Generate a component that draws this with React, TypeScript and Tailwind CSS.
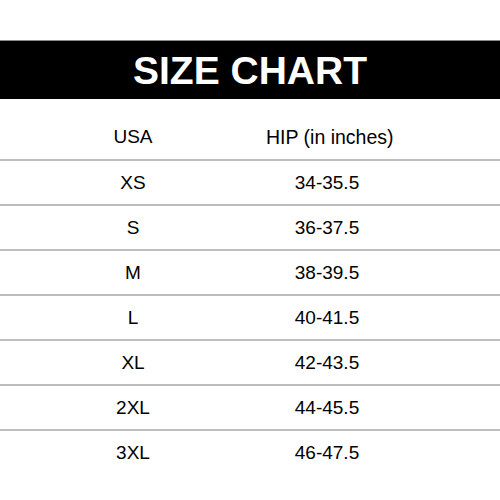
import React from "react";

const rows: [string, string][] = [
  ["XS", "34-35.5"],
  ["S", "36-37.5"],
  ["M", "38-39.5"],
  ["L", "40-41.5"],
  ["XL", "42-43.5"],
  ["2XL", "44-45.5"],
  ["3XL", "46-47.5"],
];

export default function App() {
  return (
    <div
      className="w-[500px] h-[500px] bg-white text-black overflow-hidden"
      style={{ fontFamily: '"Liberation Sans", Arial, sans-serif' }}
    >
      <div className="h-[40px]" />
      <div className="h-[59px] bg-black border-t border-[#8a8a8a] flex items-center justify-center">
        <span className="text-white font-bold text-[39px] leading-none">SIZE CHART</span>
      </div>
      <div className="h-[60px] grid grid-cols-[266px_122px] items-end pb-[11px] text-[19px] leading-[22px]">
        <div className="text-center">USA</div>
        <div className="text-center whitespace-nowrap text-[19.5px]">HIP (in inches)</div>
      </div>
      {rows.map(([s, h]) => (
        <div
          key={s}
          className="h-[45px] grid grid-cols-[266px_122px] items-center text-[19px] leading-[22px] border-t-2 border-[#bdbdbd]"
        >
          <div className="text-center">{s}</div>
          <div className="text-center">{h}</div>
        </div>
      ))}
    </div>
  );
}
